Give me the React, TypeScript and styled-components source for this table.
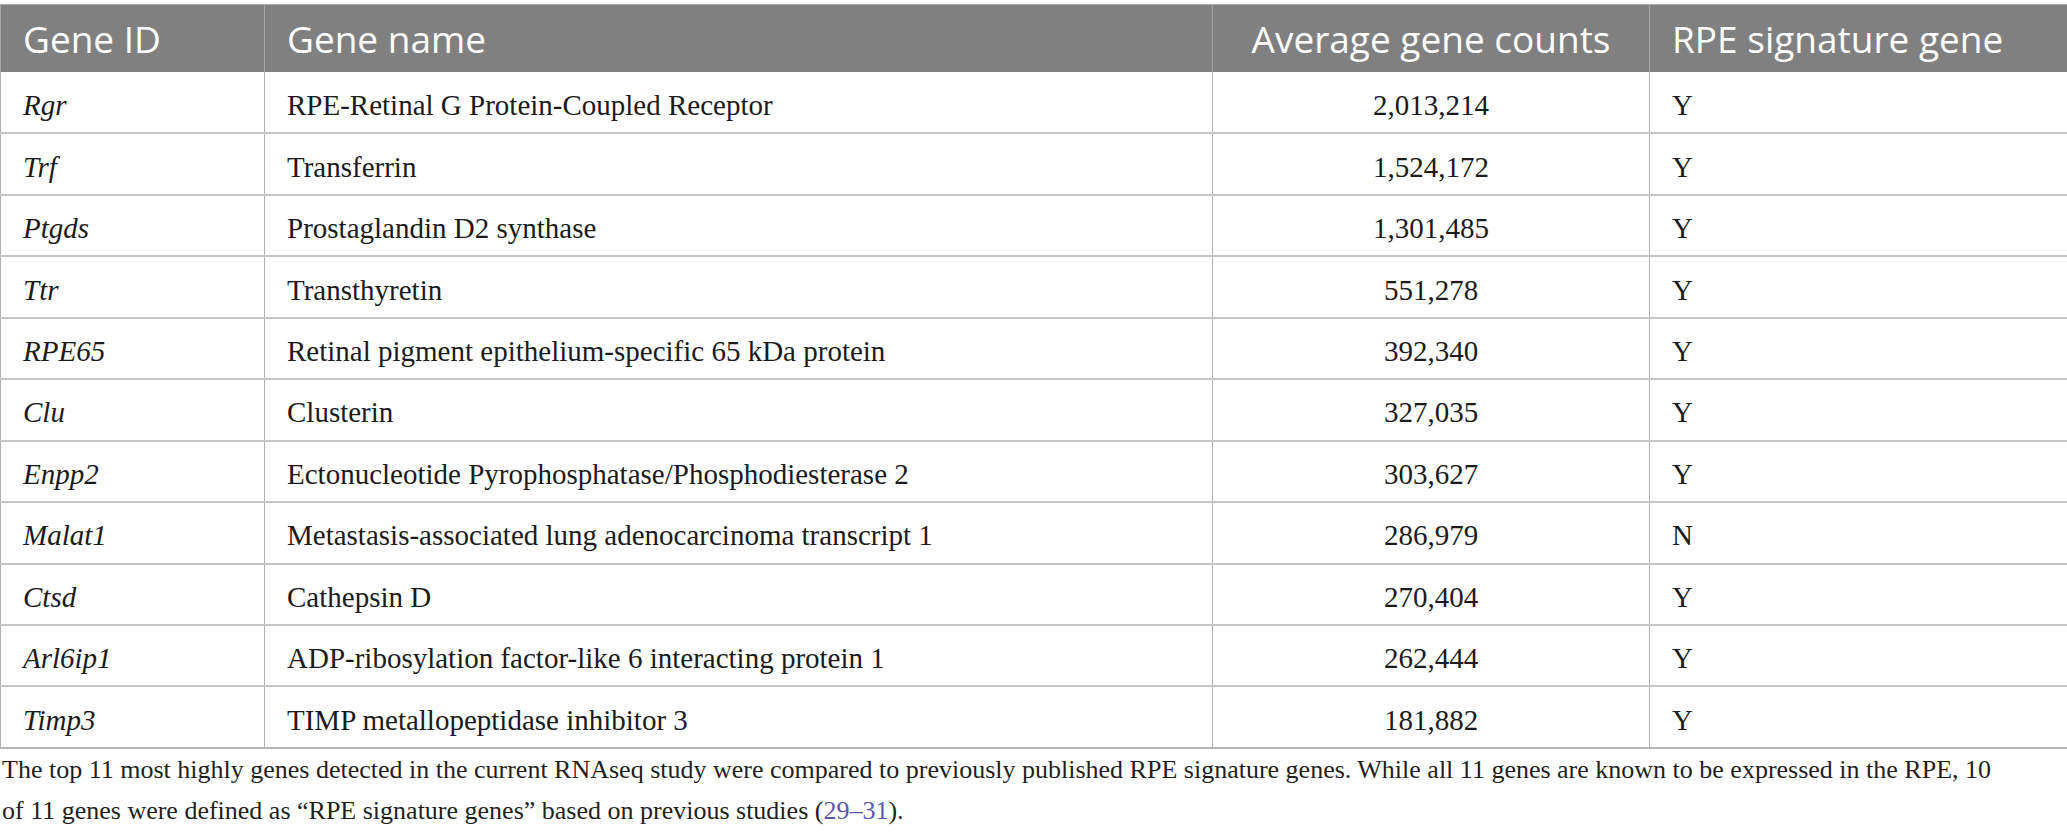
import React from "react";
import styled, { createGlobalStyle } from "styled-components";

const GlobalStyle = createGlobalStyle`
  html, body {
    margin: 0;
    padding: 0;
    background: #ffffff;
  }
`;

const Page = styled.div`
  padding-top: 4px;
  width: 2067px;
`;

const Table = styled.table`
  width: 2067px;
  border-collapse: collapse;
  table-layout: fixed;
  border-top: 1px solid #a9a9a9;
  border-bottom: 2px solid #b4b4b4;
`;

const HeaderCell = styled.th<{ $align?: "left" | "center" }>`
  height: 67px;
  padding: 0 22px;
  background: #808080;
  color: #ffffff;
  font-family: "Open Sans", "Noto Sans", sans-serif;
  font-weight: 400;
  font-size: 37px;
  text-align: ${({ $align }) => $align || "left"};
  vertical-align: middle;
  border-left: 1px solid #a3a3a3;
  border-right: 1px solid #a3a3a3;
  white-space: nowrap;
`;

const Row = styled.tr`
  height: 61.45px;
  border-bottom: 2px solid #c6c6c6;

  &:last-child {
    border-bottom: 2px solid #b4b4b4;
  }
`;

const Cell = styled.td<{ $align?: "left" | "center"; $italic?: boolean }>`
  padding: 6px 22px 0;
  color: #1b1b1b;
  font-family: "Liberation Serif", "Times New Roman", serif;
  font-size: 29px;
  font-style: ${({ $italic }) => ($italic ? "italic" : "normal")};
  text-align: ${({ $align }) => $align || "left"};
  vertical-align: middle;
  border-left: 1px solid #b2b2b2;
  border-right: 1px solid #b2b2b2;
  white-space: nowrap;
`;

const Caption = styled.p`
  margin: 0;
  padding: 0 2px;
  color: #1f1f1f;
  font-family: "Liberation Serif", "Times New Roman", serif;
  font-size: 26px;
  line-height: 41px;
`;

const Ref = styled.span`
  color: #5d56ad;
`;

type Gene = {
  id: string;
  name: string;
  counts: string;
  signature: "Y" | "N";
};

const genes: Gene[] = [
  { id: "Rgr", name: "RPE-Retinal G Protein-Coupled Receptor", counts: "2,013,214", signature: "Y" },
  { id: "Trf", name: "Transferrin", counts: "1,524,172", signature: "Y" },
  { id: "Ptgds", name: "Prostaglandin D2 synthase", counts: "1,301,485", signature: "Y" },
  { id: "Ttr", name: "Transthyretin", counts: "551,278", signature: "Y" },
  { id: "RPE65", name: "Retinal pigment epithelium-specific 65 kDa protein", counts: "392,340", signature: "Y" },
  { id: "Clu", name: "Clusterin", counts: "327,035", signature: "Y" },
  { id: "Enpp2", name: "Ectonucleotide Pyrophosphatase/Phosphodiesterase 2", counts: "303,627", signature: "Y" },
  { id: "Malat1", name: "Metastasis-associated lung adenocarcinoma transcript 1", counts: "286,979", signature: "N" },
  { id: "Ctsd", name: "Cathepsin D", counts: "270,404", signature: "Y" },
  { id: "Arl6ip1", name: "ADP-ribosylation factor-like 6 interacting protein 1", counts: "262,444", signature: "Y" },
  { id: "Timp3", name: "TIMP metallopeptidase inhibitor 3", counts: "181,882", signature: "Y" },
];

const App: React.FC = () => {
  return (
    <Page>
      <GlobalStyle />
      <Table>
        <colgroup>
          <col style={{ width: 264 }} />
          <col style={{ width: 948 }} />
          <col style={{ width: 437 }} />
          <col style={{ width: 418 }} />
        </colgroup>
        <thead>
          <tr>
            <HeaderCell>Gene ID</HeaderCell>
            <HeaderCell>Gene name</HeaderCell>
            <HeaderCell $align="center">Average gene counts</HeaderCell>
            <HeaderCell>RPE signature gene</HeaderCell>
          </tr>
        </thead>
        <tbody>
          {genes.map((gene) => (
            <Row key={gene.id}>
              <Cell $italic>{gene.id}</Cell>
              <Cell>{gene.name}</Cell>
              <Cell $align="center">{gene.counts}</Cell>
              <Cell>{gene.signature}</Cell>
            </Row>
          ))}
        </tbody>
      </Table>
      <Caption>
        The top 11 most highly genes detected in the current RNAseq study were
        compared to previously published RPE signature genes. While all 11 genes
        are known to be expressed in the RPE, 10
        <br />
        of 11 genes were defined as “RPE signature genes” based on previous
        studies (<Ref>29–31</Ref>).
      </Caption>
    </Page>
  );
};

export default App;
